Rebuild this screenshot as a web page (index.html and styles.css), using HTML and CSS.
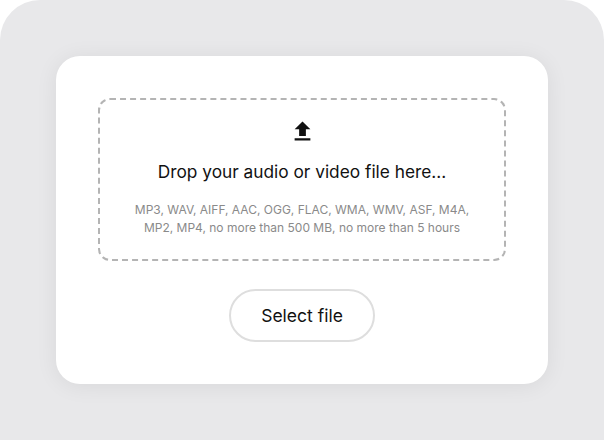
FILE: index.html
```html
<!DOCTYPE html>
<html lang="en">
<head>
  <meta charset="UTF-8">
  <meta name="viewport" content="width=device-width, initial-scale=1.0">
  <title>Upload</title>
  <link rel="stylesheet" href="styles.css">
</head>
<body>
  <div class="panel">
    <div class="upload-card">
      <div class="drop-zone">
        <svg class="upload-icon" width="27" height="27" viewBox="0 0 24 24">
          <path d="M9 16h6v-6h4l-7-7-7 7h4zm-4 2h14v2H5z" fill="#111"/>
        </svg>
        <p class="drop-title">Drop your audio or video file here...</p>
        <p class="drop-hint">MP3, WAV, AIFF, AAC, OGG, FLAC, WMA, WMV, ASF, M4A,<br>MP2, MP4, no more than 500 MB, no more than 5 hours</p>
      </div>
      <div class="actions">
        <button type="button" class="select-btn">Select file</button>
      </div>
    </div>
  </div>
</body>
</html>
```

FILE: styles.css
```css
body {
  margin: 0;
  padding: 0;
  font-family: Inter, "Liberation Sans", Arial, sans-serif;
  background-color: #fff;
}

.panel {
  height: 100vh;
  padding: 56px;
  box-sizing: border-box;
  background-color: #e8e8ea;
  border-radius: 40px 40px 0 0;
}

.upload-card {
  height: 328px;
  padding: 42px;
  box-sizing: border-box;
  background-color: #fff;
  border-radius: 24px;
  box-shadow: 0 2px 22px rgba(0, 0, 0, 0.07);
}

.drop-zone {
  height: 163px;
  box-sizing: border-box;
  padding-top: 18px;
  border: 2px dashed #b4b4b4;
  border-radius: 12px;
  text-align: center;
}

.upload-icon {
  display: block;
  margin: 0 auto;
}

.drop-title {
  margin: 15px 0 0;
  font-size: 17.3px;
  line-height: 24px;
  color: #111;
}

.drop-hint {
  margin: 17px 0 0;
  font-size: 12px;
  line-height: 18px;
  color: #8a8a8a;
}

.actions {
  display: flex;
  justify-content: center;
  margin-top: 28px;
}

.select-btn {
  width: 146px;
  height: 53px;
  border: 2px solid #dedede;
  border-radius: 27px;
  background-color: #fff;
  font-family: inherit;
  font-size: 17.5px;
  color: #111;
  cursor: pointer;
}
```
